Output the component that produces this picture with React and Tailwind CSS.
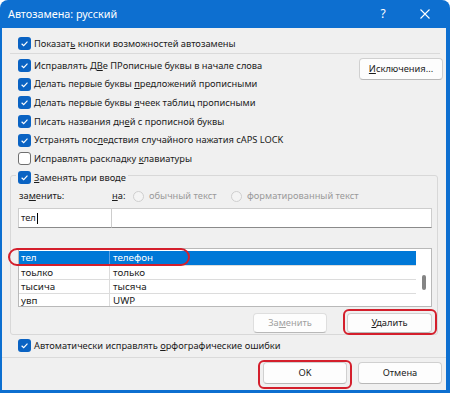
import React from "react";

function Box({ on = true }) {
  if (!on) {
    return <span className="w-[13px] h-[13px] rounded-[3px] border border-[#6f6f6f] bg-white shrink-0" />;
  }
  return (
    <span className="w-[13px] h-[13px] rounded-[3px] bg-[#0a63c3] flex items-center justify-center shrink-0">
      <svg width="9" height="9" viewBox="0 0 10 10">
        <path d="M1.8 5.3 L4.1 7.5 L8.3 2.8" stroke="white" strokeWidth="1.3" fill="none" />
      </svg>
    </span>
  );
}

function Radio({ children }) {
  return (
    <div className="flex items-center gap-[5px] text-[#9a9a9a] whitespace-nowrap">
      <span className="w-[11px] h-[11px] rounded-full border border-[#cfcfcf] bg-[#f4f4f4] shrink-0" />
      <span>{children}</span>
    </div>
  );
}

function Btn({ children, className = "" }) {
  return (
    <div className={`flex items-center justify-center rounded-[4px] border border-[#d0d0d0] border-b-[#b8b8b8] bg-[#fdfdfd] ${className}`}>
      {children}
    </div>
  );
}

const rows = [
  ["тел", "телефон"],
  ["тоьлко", "только"],
  ["тысича", "тысяча"],
  ["увп", "UWP"],
];

export default function App() {
  return (
    <div className="relative w-[450px] h-[393px] bg-[#0d6fd0] rounded-t-[8px] overflow-hidden flex flex-col font-['Noto_Sans','DejaVu_Sans',sans-serif] text-[9.3px] text-[#1b1b1b] leading-none">
      {/* title bar */}
      <div className="h-[28px] flex items-center pl-[8px] pr-[4px] text-white shrink-0">
        <span className="text-[10.8px]">Автозамена: русский</span>
        <div className="ml-auto w-[42px] flex justify-center text-[12px]">?</div>
        <div className="w-[42px] flex justify-center">
          <svg width="10" height="10" viewBox="0 0 10 10">
            <path d="M0.5 0.5 L9.5 9.5 M9.5 0.5 L0.5 9.5" stroke="white" strokeWidth="1.1" />
          </svg>
        </div>
      </div>

      <div className="flex-1 ml-[2px] mr-[4px] mb-[3px] bg-[#f0f0f0] flex flex-col">
        <div className="pt-[6px] pl-[16px]">
          <div className="flex items-center gap-[3px] h-[19px]">
            <Box />
            <span>
              Показат<u>ь</u> кнопки возможностей автозамены
            </span>
          </div>
        </div>
        <div className="ml-[8px] mr-[6px] border-t border-[#dadada]" />

        <div className="flex pt-[2px]">
          <div className="flex-1 pl-[16px]">
            <div className="flex items-center gap-[3px] h-[18.7px]">
              <Box />
              <span>
                Исправлять Д<u>В</u>е ПРописные буквы в начале слова
              </span>
            </div>
            <div className="flex items-center gap-[3px] h-[18.7px]">
              <Box />
              <span>
                Делать первые буквы <u>п</u>редложений прописными
              </span>
            </div>
            <div className="flex items-center gap-[3px] h-[18.7px]">
              <Box />
              <span>
                Делать первые буквы <u>я</u>чеек таблиц прописными
              </span>
            </div>
            <div className="flex items-center gap-[3px] h-[18.7px]">
              <Box />
              <span>
                Писать названия дн<u>е</u>й с прописной буквы
              </span>
            </div>
            <div className="flex items-center gap-[3px] h-[18.7px]">
              <Box />
              <span>
                Устранять пос<u>л</u>едствия случайного нажатия cAPS LOCK
              </span>
            </div>
            <div className="flex items-center gap-[3px] h-[18.7px]">
              <Box on={false} />
              <span>
                Исправлять раскладку <u>к</u>лавиатуры
              </span>
            </div>
          </div>
          <div className="pr-[3px] pt-[2px]">
            <Btn className="w-[84px] h-[22px]">
              <span>
                <u>И</u>сключения...
              </span>
            </Btn>
          </div>
        </div>

        {/* replace group */}
        <div className="mt-[7px] ml-[8px] w-[428px] border border-[#d8d8d8] rounded-[3px] pb-[1px] pr-[5px]">
          <div className="-mt-[8px] ml-[5px] h-[19px] flex">
            <div className="flex items-center gap-[3px] bg-[#f0f0f0] px-[2px]">
              <Box />
              <span>
                <u>З</u>аменять при вводе
              </span>
            </div>
          </div>

          <div className="flex items-center h-[18px] pl-[8px]">
            <span className="w-[93px]">
              за<u>м</u>енить:
            </span>
            <span className="w-[21px]">
              <u>н</u>а:
            </span>
            <div className="w-[98px]">
              <Radio>обычный текст</Radio>
            </div>
            <Radio>форматированный текст</Radio>
          </div>

          <div className="mt-[3px] ml-[7px] flex h-[20px]">
            <div className="w-[94px] bg-white border border-[#cdcdcd] border-b-[#8a8a8a] flex items-center pl-[2px]">
              тел<span className="w-px h-[11px] bg-black ml-px" />
            </div>
            <div className="flex-1 bg-white border border-l-0 border-[#cdcdcd] border-b-[#8a8a8a]" />
          </div>

          <div className="mt-[20px] ml-[7px] h-[59px] border border-[#b9b9b9] bg-white flex overflow-hidden text-[9.8px]">
            <div className="flex-1 pt-[2px]">
              {rows.map(([a, b], i) => (
                <div
                  key={a}
                  className={
                    i === 0
                      ? "flex h-[14px] items-center bg-[#0078d7] text-white"
                      : "flex h-[14px] items-center border-t border-[#dcdcdc]"
                  }
                >
                  <span className={i === 0 ? "w-[91px] pl-[2px] h-full flex items-center border-r border-[#5aa0e6]" : "w-[91px] pl-[2px] h-full flex items-center border-r border-[#dcdcdc]"}>
                    {a}
                  </span>
                  <span className="pl-[3px]">{b}</span>
                </div>
              ))}
            </div>
            <div className="w-[15px] flex justify-center pt-[26px]">
              <div className="w-[4px] h-[15px] rounded-full bg-[#858585]" />
            </div>
          </div>

          <div className="mt-[6px] flex justify-end gap-[20px]">
            <Btn className="w-[74px] h-[20px] text-[#a0a0a0] border-[#dedede]">
              <span>
                За<u>м</u>енить
              </span>
            </Btn>
            <Btn className="w-[85px] h-[20px]">
              <span>
                <u>У</u>далить
              </span>
            </Btn>
          </div>
        </div>

        <div className="mt-[1px] pl-[16px] flex items-center gap-[3px] h-[19px]">
          <Box />
          <span>
            Автоматически исправлять <u>о</u>рфографические ошибки
          </span>
        </div>
        <div className="mt-[2px] border-t border-[#dadada]" />

        <div className="mt-[4px] flex justify-end gap-[11px] pr-[4px]">
          <Btn className="w-[84px] h-[22px] border-[#0a63c3]">OK</Btn>
          <Btn className="w-[84px] h-[22px]">Отмена</Btn>
        </div>
      </div>

      {/* red highlight marks */}
      <div className="absolute left-[8px] top-[248px] w-[182px] h-[18px] rounded-[9px] border-2 border-[#d41f2c]" />
      <div className="absolute left-[343px] top-[309px] w-[94px] h-[26px] rounded-[6px] border-2 border-[#d41f2c]" />
      <div className="absolute left-[258px] top-[360px] w-[94px] h-[29px] rounded-[6px] border-2 border-[#d41f2c]" />
    </div>
  );
}
